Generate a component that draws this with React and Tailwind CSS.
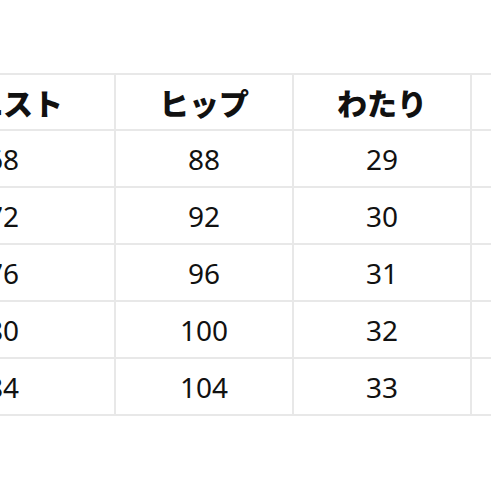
export default function App() {
  const headers = ["ウエスト", "ヒップ", "わたり", ""];
  const rows = [
    ["68", "88", "29", ""],
    ["72", "92", "30", ""],
    ["76", "96", "31", ""],
    ["80", "100", "32", ""],
    ["84", "104", "33", ""],
  ];
  return (
    <div className="w-[491px] h-[491px] bg-white overflow-hidden">
      <div className="pt-[73px] -ml-[110px]">
        <div className="grid grid-cols-[222px_176px_176px_176px] gap-[2px] p-[2px] bg-[#e8e8e8] w-max">
          {headers.map((h, j) => (
            <div
              key={"h" + j}
              className="bg-white h-[54px] flex items-center justify-center text-[30px] font-black text-[#111] leading-none"
              style={{ fontFamily: '"Noto Sans CJK JP", "Noto Sans", sans-serif' }}
            >
              {h}
            </div>
          ))}
          {rows.map((r, i) =>
            r.map((c, j) => (
              <div
                key={i + "-" + j}
                className="bg-white h-[55px] flex items-center justify-center text-[28px] text-[#111] leading-none"
                style={{ fontFamily: '"Noto Sans", sans-serif' }}
              >
                {c}
              </div>
            ))
          )}
        </div>
      </div>
    </div>
  );
}
